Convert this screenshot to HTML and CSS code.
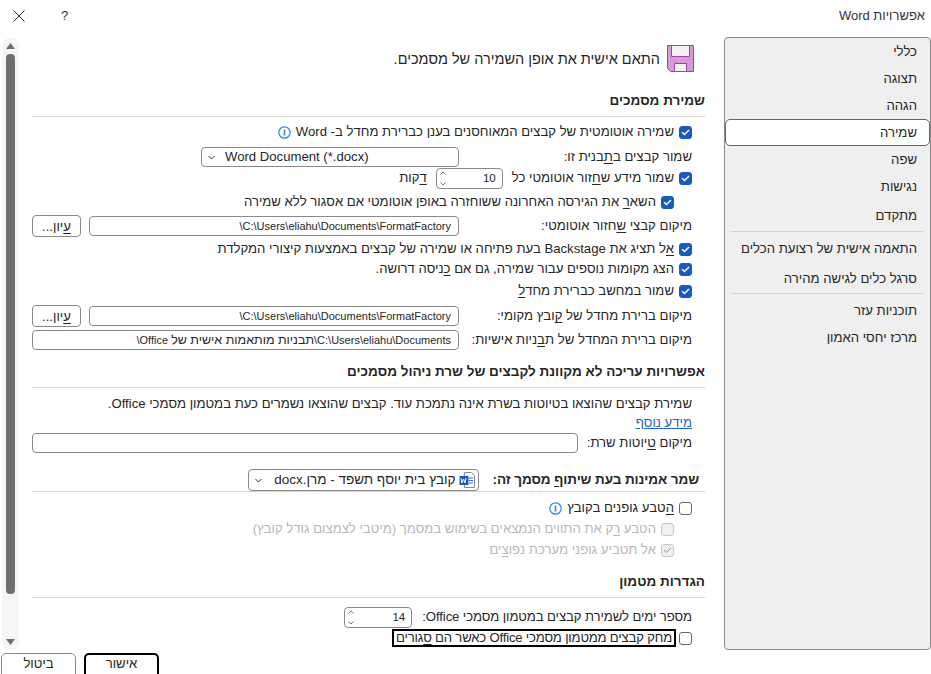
FILE: index.html
```html
<!DOCTYPE html>
<html lang="he" dir="rtl">
<head>
<meta charset="utf-8">
<title>אפשרויות Word</title>
<link rel="stylesheet" href="styles.css">
</head>
<body>
<div class="dialog">
  <header class="titlebar">
    <span class="title">אפשרויות Word</span>
    <div class="title-tools">
      <span class="help">?</span>
      <svg class="close" width="12" height="12" viewBox="0 0 12 12"><path d="M.5.5l11 11M11.500.5l-11 11" stroke="#333" fill="none"/></svg>
    </div>
  </header>
  <div class="main">
    <nav class="nav">
      <div class="nav-item h1">כללי</div>
      <div class="nav-item h1">תצוגה</div>
      <div class="nav-item h1">הגהה</div>
      <div class="nav-item selected">שמירה</div>
      <div class="nav-item h1">שפה</div>
      <div class="nav-item h1">נגישות</div>
      <div class="nav-item h4">מתקדם</div>
      <div class="nav-sep"></div>
      <div class="nav-item h5">התאמה אישית של רצועת הכלים</div>
      <div class="nav-item h6">סרגל כלים לגישה מהירה</div>
      <div class="nav-sep"></div>
      <div class="nav-item h5">תוכניות עזר</div>
      <div class="nav-item h7">מרכז יחסי האמון</div>
    </nav>
    <div class="content">
      <div class="intro">
        <svg width="27" height="27" viewBox="0 0 27 27"><path d="M.5.5h26v26H3.500l-3-3z" fill="#d79ad9" stroke="#a33fa9"/><path d="M4.500.5h18v11h-18z" fill="#f2f2f2" stroke="#a33fa9"/><path d="M7.500 18.500h12v8h-12z" fill="#f2f2f2" stroke="#a33fa9"/></svg>
        <span>התאם אישית את אופן השמירה של מסמכים.</span>
      </div>

      <h2 class="heading">שמירת מסמכים</h2>
      <div class="row mt5">
        <span class="check on"><svg width="9" height="7" viewBox="0 0 9 7"><path d="M1 3.200l2.500 2.300L8 1" stroke="#fff" stroke-width="1.500" fill="none"/></svg></span>
        <span>שמירה אוטומטית של קבצים המאוחסנים בענן כברירת מחדל ב- Word</span>
        <svg class="info" width="13" height="13" viewBox="0 0 13 13"><circle cx="6.500" cy="6.500" r="5.700" fill="#fff" stroke="#2b88d8" stroke-width="1.200"/><path d="M6.500 3.500v6" stroke="#2b88d8" stroke-width="1.500"/></svg>
      </div>
      <div class="row mt5 field-row">
        <span class="label">שמור קבצים ב<u>ת</u>בנית זו:</span>
        <div class="combo wide" dir="ltr">
          <svg width="7" height="5" viewBox="0 0 7 5"><path d="M.5 1l3 3 3-3" stroke="#333" fill="none"/></svg>
          <span>Word Document (*.docx)</span>
        </div>
      </div>
      <div class="row mt1">
        <span class="check on"><svg width="9" height="7" viewBox="0 0 9 7"><path d="M1 3.200l2.500 2.300L8 1" stroke="#fff" stroke-width="1.500" fill="none"/></svg></span>
        <span>שמור מידע ש<u>ח</u>זור אוטומטי כל</span>
        <div class="spin autosave" dir="ltr">
          <span class="arrows"><svg width="6" height="15" viewBox="0 0 6 15"><path d="M.5 3.500L3 1l2.500 2.500M.5 11.500L3 14l2.500-2.500" stroke="#777" fill="none"/></svg></span>
          <span class="spin-val">10</span>
        </div>
        <span class="unit"><u>ד</u>קות</span>
      </div>
      <div class="row mt4 indent">
        <span class="check on"><svg width="9" height="7" viewBox="0 0 9 7"><path d="M1 3.200l2.500 2.300L8 1" stroke="#fff" stroke-width="1.500" fill="none"/></svg></span>
        <span>השא<u>ר</u> את הגירסה האחרונה ששוחזרה באופן אוטומטי אם אסגור ללא שמירה</span>
      </div>
      <div class="row mt4 field-row">
        <span class="label">מיקום קבצי <u>ש</u>חזור אוטומטי:</span>
        <div class="path">C:\Users\eliahu\Documents\FormatFactory\</div>
        <button class="browse" type="button"><u>ע</u>יון...</button>
      </div>
      <div class="row mt3">
        <span class="check on"><svg width="9" height="7" viewBox="0 0 9 7"><path d="M1 3.200l2.500 2.300L8 1" stroke="#fff" stroke-width="1.500" fill="none"/></svg></span>
        <span><u>א</u>ל תציג את Backstage בעת פתיחה או שמירה של קבצים באמצעות קיצורי המקלדת</span>
      </div>
      <div class="row mt0">
        <span class="check on"><svg width="9" height="7" viewBox="0 0 9 7"><path d="M1 3.200l2.500 2.300L8 1" stroke="#fff" stroke-width="1.500" fill="none"/></svg></span>
        <span>הצג מקומות נוספים עבור שמירה, גם אם <u>כ</u>ניסה דרושה.</span>
      </div>
      <div class="row mt2">
        <span class="check on"><svg width="9" height="7" viewBox="0 0 9 7"><path d="M1 3.200l2.500 2.300L8 1" stroke="#fff" stroke-width="1.500" fill="none"/></svg></span>
        <span>שמור במחשב כברירת מחד<u>ל</u></span>
      </div>
      <div class="row mt5 field-row">
        <span class="label">מיקום ברירת מחדל של <u>ק</u>ובץ מקומי:</span>
        <div class="path">C:\Users\eliahu\Documents\FormatFactory\</div>
        <button class="browse" type="button"><u>ע</u>יון...</button>
      </div>
      <div class="row mt4 field-row">
        <span class="label">מיקום ברירת המחדל של ת<u>ב</u>ניות אישיות:</span>
        <div class="path">C:\Users\eliahu\Documents\<span class="heb">תבניות מותאמות אישית של</span> Office\</div>
      </div>

      <h2 class="heading second">אפשרויות עריכה לא מקוונת לקבצים של שרת ניהול מסמכים</h2>
      <p class="text">שמירת קבצים שהוצאו בטיוטות בשרת אינה נתמכת עוד. קבצים שהוצאו נשמרים כעת במטמון מסמכי Office.</p>
      <a class="link" href="#">מידע נוסף</a>
      <div class="row mt0 draft-row">
        <span class="draft-label">מיקום <u>ט</u>יוטות שרת:</span>
        <div class="path"></div>
      </div>

      <div class="share-head">
        <h2 class="share-title">שמר אמינות בעת שיתו<u>ף</u> מסמך זה:</h2>
        <div class="combo doc">
          <svg width="16" height="16" viewBox="0 0 16 16"><path d="M5.500.5h7l3 3v12h-10z" fill="#fff" stroke="#8a8a8a"/><path d="M10 6h4M10 8.500h4M10 11h4" stroke="#2b6fd0"/><rect x=".5" y="4" width="9" height="9" fill="#185abd"/><path d="M2 6l1 5 1.500-4 1.500 4 1-5" stroke="#fff" fill="none"/></svg>
          <span class="doc-name">קובץ בית יוסף תשפד - מרן.docx</span>
          <svg class="doc-chev" width="7" height="5" viewBox="0 0 7 5"><path d="M.5 1l3 3 3-3" stroke="#333" fill="none"/></svg>
        </div>
      </div>
      <div class="row mt6">
        <span class="check"></span>
        <span><u>ה</u>טבע גופנים בקובץ</span>
        <svg class="info" width="13" height="13" viewBox="0 0 13 13"><circle cx="6.500" cy="6.500" r="5.700" fill="#fff" stroke="#2b88d8" stroke-width="1.200"/><path d="M6.500 3.500v6" stroke="#2b88d8" stroke-width="1.500"/></svg>
      </div>
      <div class="row mt1 indent disabled">
        <span class="check off"></span>
        <span>הטבע <u>ר</u>ק את התווים הנמצאים בשימוש במסמך (מיטבי לצמצום גודל קובץ)</span>
      </div>
      <div class="row mt1 indent disabled">
        <span class="check off"><svg width="9" height="7" viewBox="0 0 9 7"><path d="M1 3.200l2.500 2.300L8 1" stroke="#999" stroke-width="1" fill="none"/></svg></span>
        <span>אל תטביע גופני מערכת נפו<u>צ</u>ים</span>
      </div>

      <h2 class="heading third">הגדרות מטמון</h2>
      <div class="row mt9 days-row">
        <span class="days-label">מספר ימים לשמירת קבצים במטמון מסמכי Office:</span>
        <div class="spin days" dir="ltr">
          <span class="arrows"><svg width="6" height="15" viewBox="0 0 6 15"><path d="M.5 3.500L3 1l2.500 2.500M.5 11.500L3 14l2.500-2.500" stroke="#777" fill="none"/></svg></span>
          <span class="spin-val">14</span>
        </div>
      </div>
      <div class="row mt1">
        <span class="check"></span>
        <span class="focused">מחק קבצים ממטמון מסמכי Office כאשר הם <u>ס</u>גורים</span>
      </div>
    </div>
    <div class="scrollbar">
      <svg width="9" height="6" viewBox="0 0 9 6"><path d="M0 6l4.500-6L9 6z" fill="#6e6e6e"/></svg>
      <div class="thumb"></div>
      <svg width="9" height="6" viewBox="0 0 9 6"><path d="M0 0l4.500 6L9 0z" fill="#6e6e6e"/></svg>
    </div>
  </div>
  <footer class="footer">
    <button class="btn primary" type="button">אישור</button>
    <button class="btn" type="button">ביטול</button>
  </footer>
</div>
</body>
</html>
```
FILE: styles.css
```css
* { box-sizing: border-box; }
html, body { margin: 0; padding: 0; height: 674px; overflow: hidden; background: #fff; }
body { font: 13.150px/18px "Liberation Sans", Arial, sans-serif; color: #262626; }
u { text-underline-offset: 2px; }

.dialog { height: 674px; display: flex; flex-direction: column; overflow: hidden; }

.titlebar { height: 37px; flex: none; display: flex; justify-content: space-between; align-items: center; padding: 0 6px 6px 13px; }
.title { font-size: 13px; color: #333; }
.title-tools { display: flex; align-items: center; gap: 36px; }
.help { font-size: 13px; color: #333; }

.main { flex: none; height: 613px; display: flex; }

.nav { width: 207px; flex: none; background: #efefef; border: 1px solid #8a8a8a; border-radius: 4px; display: flex; flex-direction: column; }
.nav-item { padding-right: 13px; display: flex; align-items: center; flex: none; }
.h1 { height: 27px; }
.h4 { height: 31px; }
.h5 { height: 33px; }
.h6 { height: 28px; }
.h7 { height: 21px; }
.nav-sep { height: 1px; margin: 0 6px; background: #d2d2d2; flex: none; }
.nav-item.selected { height: 27px; background: #fff; border: 1px solid #666; border-radius: 5px; padding-right: 12px; }

.content { flex: 1; min-width: 0; padding: 5px 19px 0 13px; display: flex; flex-direction: column; }

.intro { height: 27px; margin-top: 3px; display: flex; align-items: center; gap: 7px; padding-right: 11px; font-size: 14.500px; }
.intro svg { flex: none; }

.heading { margin: 20px 0 0; padding: 0 0 6px; font-size: 13.500px; line-height: 18px; font-weight: 700; height: 25px; border-bottom: 1px solid #d4d4d4; flex: none; }
.heading.second { margin-top: 13px; }
.heading.third { margin-top: 13px; }

.row { height: 20px; padding-right: 13px; display: flex; align-items: center; gap: 5px; flex: none; }
.indent { padding-right: 31px; }
.mt0 { margin-top: 0; }
.mt1 { margin-top: 1px; }
.mt2 { margin-top: 2px; }
.mt3 { margin-top: 3px; }
.mt4 { margin-top: 4px; }
.mt5 { margin-top: 5px; }
.mt6 { margin-top: 6px; }
.mt9 { margin-top: 9px; }

.check { width: 13px; height: 13px; flex: none; border: 1px solid #666; border-radius: 3px; background: #fff; display: flex; align-items: center; justify-content: center; }
.check.on { background: #185abd; border-color: #185abd; }
.check.off { background: #f0f0f0; border-color: #c8c8c8; }
.disabled { color: #b8b8b8; }
.info { flex: none; }

.field-row { gap: 0; }
.label { width: 233px; flex: none; }

.combo { height: 20px; border: 1px solid #8a8a8a; border-radius: 4px; background: #fff; display: flex; align-items: center; flex: none; }
.combo.wide { width: 258px; gap: 10px; padding-left: 6px; margin-left: auto; }
.path { height: 20px; flex: 1; min-width: 0; border: 1px solid #8a8a8a; border-radius: 4px; background: #fff; padding: 0 7px; font-size: 11px; line-height: 18px; white-space: nowrap; overflow: hidden; }
.heb { font-size: 12.500px; }
.browse { width: 49px; height: 22px; flex: none; margin-right: 8px; padding: 0; border: 1px solid #8a8a8a; border-radius: 4px; background: #fff; font: 13.150px "Liberation Sans", sans-serif; color: #262626; }

.spin { width: 67px; height: 21px; flex: none; border: 1px solid #8a8a8a; border-radius: 4px; background: #fff; display: flex; align-items: center; padding: 0 6px 0 3px; font-size: 11.500px; }
.autosave { margin-right: 4px; }
.unit { margin-right: 4px; }
.arrows { display: flex; }
.spin-val { margin-left: auto; }

.text { margin: 7px 0 0; padding-right: 13px; height: 19px; flex: none; }
.link { display: block; padding-right: 13px; height: 19px; color: #1f64c4; text-decoration: underline; flex: none; }
.draft-row { gap: 0; }
.draft-label { width: 114px; flex: none; }

.share-head { margin-top: 16px; height: 23px; flex: none; display: flex; align-items: center; padding-right: 6px; border-bottom: 1px solid #d4d4d4; }
.share-title { margin: 0 0 0 14px; font-size: 13.500px; line-height: 18px; font-weight: 700; flex: none; letter-spacing: -.08px; }
.combo.doc { width: 231px; height: 22px; padding: 0 3px 0 6px; gap: 3px; font-size: 13.500px; }
.doc-chev { margin-right: auto; }

.days-row { gap: 10px; }
.days-label { letter-spacing: -.1px; }
.days { width: 68px; }
.focused { border: 2px solid #000; padding: 0 2px; line-height: 14px; height: 18px; letter-spacing: -.2px; margin-right: -2px; }

.scrollbar { width: 17px; flex: none; margin: 1px 0 0 2px; background: #f5f5f5; border-radius: 8px; display: flex; flex-direction: column; align-items: center; padding: 5px 0; }
.thumb { width: 9px; flex: 1; background: #6e6e6e; border-radius: 4px; margin: 5px 0 45px; }

.footer { flex: 1; display: flex; justify-content: flex-end; align-items: flex-start; gap: 8px; padding-left: 1px; padding-top: 3px; }
.btn { width: 75px; height: 30px; padding: 0 0 9px; border: 1px solid #8a8a8a; border-radius: 5px; background: #fff; font: 13.150px "Liberation Sans", sans-serif; color: #262626; }
.btn.primary { border: 2px solid #000; }
```
